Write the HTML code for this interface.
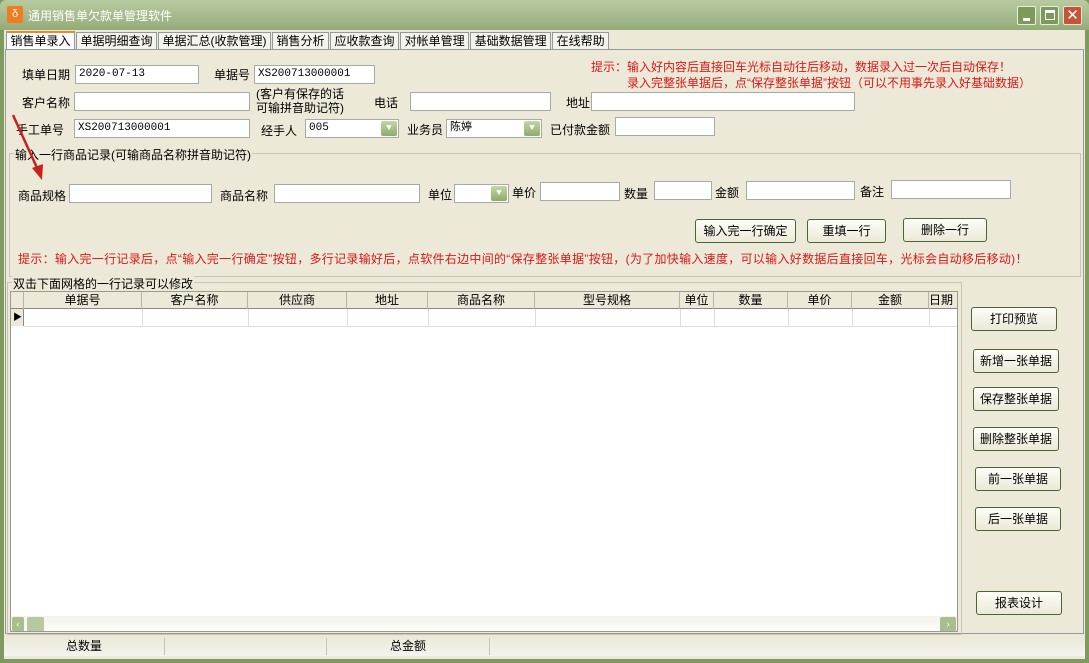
<!DOCTYPE html><html><head><meta charset="utf-8"><style>
*{margin:0;padding:0;box-sizing:border-box}
body{width:1089px;height:663px;overflow:hidden;background:#7f9a5e;font-family:"Liberation Sans","Noto Sans CJK SC",sans-serif;font-size:12px;color:#000;position:relative}
.a{position:absolute;white-space:nowrap}
.in{position:absolute;background:#fff;border:1px solid #a5aca0;height:19px;font-size:11px;line-height:17px;padding-left:3px;font-family:"Liberation Mono","Noto Sans CJK SC",monospace}
.cb{position:absolute;width:16px;height:15px;top:1px;right:1px;background:linear-gradient(#c4d6a8,#8fab6a);border-radius:2px;color:#fff;font-size:9px;text-align:center;line-height:15px}
.btn{position:absolute;background:linear-gradient(#fdfdf8,#ece9d8);border:1px solid #4b6534;border-radius:3px;text-align:center;font-size:12px;line-height:22px;height:24px}
.red{color:#d71a1a}
.th{position:absolute;top:0;height:17px;border-right:1px solid #b8b4a0;text-align:center;line-height:17px;font-size:12px}
.tc{position:absolute;top:17px;height:17px;border-right:1px solid #ddd}
.tab{display:inline-block;border:1px solid #919b9c;padding:0 3.5px;background:#f4f3ee;margin-left:1px}
</style></head><body>
<div class="a" style="left:0;top:0;width:1089px;height:30px;background:linear-gradient(#b8cba0,#a3b98a 60%,#94ab78);border-radius:6px 6px 0 0"></div>
<div class="a" style="left:7px;top:6px;width:16px;height:17px;background:#f07c22;border-radius:2px;color:#fff;font-size:11px;text-align:center;line-height:16px">δ</div>
<div class="a" style="left:28px;top:7px;color:#fff;font-size:12px">通用销售单欠款单管理软件</div>
<div class="a" style="left:1017px;top:6px;width:19px;height:19px;background:#7d9a5a;border:1px solid #e6eedc;border-radius:2px"><div style="position:absolute;left:5px;top:11px;width:7px;height:3px;background:#fff"></div></div>
<div class="a" style="left:1040px;top:6px;width:19px;height:19px;background:#7d9a5a;border:1px solid #e6eedc;border-radius:2px"><div style="position:absolute;left:4px;top:3px;width:10px;height:10px;border:1px solid #fff;border-top-width:3px"></div></div>
<div class="a" style="left:1063px;top:6px;width:19px;height:19px;background:#c5553a;border:1px solid #f2ddd2;border-radius:2px;color:#fff;font-size:15px;line-height:17px;text-align:center">✕</div>
<div class="a" style="left:4px;top:30px;width:1081px;height:629px;background:#ece9d8"></div>
<div class="a" style="left:6px;top:32px;height:17px;font-size:12px;line-height:16px">
<span style="display:inline-block;border:1px solid #919b9c;border-top:2px solid #e68b2c;border-bottom:none;background:#fcfcfe;padding:0 3.5px;height:18px;margin-top:-1px">销售单录入</span><span class="tab">单据明细查询</span><span class="tab">单据汇总(收款管理)</span><span class="tab">销售分析</span><span class="tab">应收款查询</span><span class="tab">对帐单管理</span><span class="tab">基础数据管理</span><span class="tab">在线帮助</span></div>
<div class="a" style="left:5px;top:49px;width:1079px;height:585px;border:1px solid #919b9c;background:#ece9d8"></div>
<div class="a" style="left:22px;top:66px">填单日期</div><div class="in" style="left:75px;top:65px;width:124px">2020-07-13</div>
<div class="a" style="left:214px;top:66px">单据号</div><div class="in" style="left:254px;top:65px;width:121px">XS200713000001</div>
<div class="a red" style="left:591px;top:58px">提示：输入好内容后直接回车光标自动往后移动，数据录入过一次后自动保存！</div>
<div class="a red" style="left:627px;top:74px">录入完整张单据后，点“保存整张单据”按钮（可以不用事先录入好基础数据）</div>
<div class="a" style="left:22px;top:94px">客户名称</div><div class="in" style="left:74px;top:92px;width:176px"></div>
<div class="a" style="left:256px;top:87px;line-height:14px">(客户有保存的话<br>可输拼音助记符)</div>
<div class="a" style="left:374px;top:94px">电话</div><div class="in" style="left:410px;top:92px;width:141px"></div>
<div class="a" style="left:566px;top:94px">地址</div><div class="in" style="left:591px;top:92px;width:264px"></div>
<div class="a" style="left:16px;top:121px">手工单号</div><div class="in" style="left:74px;top:119px;width:176px">XS200713000001</div>
<div class="a" style="left:261px;top:122px">经手人</div><div class="in" style="left:305px;top:119px;width:94px">005<div class="cb">▼</div></div>
<div class="a" style="left:407px;top:121px">业务员</div><div class="in" style="left:446px;top:119px;width:96px">陈婷<div class="cb">▼</div></div>
<div class="a" style="left:550px;top:121px">已付款金额</div><div class="in" style="left:615px;top:117px;width:100px"></div>
<div class="a" style="left:9px;top:153px;width:1072px;height:124px;border:1px solid #c9c5b2"></div>
<div class="a" style="left:14px;top:146px;background:#ece9d8;padding:0 1px">输入一行商品记录(可输商品名称拼音助记符)</div>
<div class="a" style="left:18px;top:187px">商品规格</div><div class="in" style="left:69px;top:184px;width:143px"></div>
<div class="a" style="left:220px;top:187px">商品名称</div><div class="in" style="left:274px;top:184px;width:146px"></div>
<div class="a" style="left:428px;top:186px">单位</div><div class="in" style="left:454px;top:184px;width:55px"><div class="cb">▼</div></div>
<div class="a" style="left:512px;top:184px">单价</div><div class="in" style="left:540px;top:182px;width:80px"></div>
<div class="a" style="left:624px;top:185px">数量</div><div class="in" style="left:654px;top:181px;width:58px"></div>
<div class="a" style="left:715px;top:184px">金额</div><div class="in" style="left:746px;top:181px;width:109px"></div>
<div class="a" style="left:860px;top:183px">备注</div><div class="in" style="left:891px;top:180px;width:120px"></div>
<div class="btn" style="left:695px;top:219px;width:101px">输入完一行确定</div>
<div class="btn" style="left:807px;top:219px;width:79px">重填一行</div>
<div class="btn" style="left:903px;top:218px;width:84px">删除一行</div>
<div class="a red" style="left:18px;top:250px;font-size:12px;letter-spacing:0.3px">提示：输入完一行记录后，点“输入完一行确定”按钮，多行记录输好后，点软件右边中间的“保存整张单据”按钮，(为了加快输入速度，可以输入好数据后直接回车，光标会自动移后移动)！</div>
<div class="a" style="left:7px;top:282px;width:955px;height:353px;border:1px solid #c9c5b2"></div>
<div class="a" style="left:12px;top:275px;background:#ece9d8;padding:0 1px">双击下面网格的一行记录可以修改</div>
<div class="a" style="left:10px;top:291px;width:948px;height:341px;background:#fff;border:1px solid #9c9a8c;overflow:hidden">
<div class="a" style="left:0;top:0;width:948px;height:17px;background:#ece9d8;border-bottom:1px solid #888"></div>
<div class="th" style="left:0;width:13px"></div>
<div class="th" style="left:13px;width:118px">单据号</div>
<div class="th" style="left:131px;width:106px">客户名称</div>
<div class="th" style="left:237px;width:99px">供应商</div>
<div class="th" style="left:336px;width:81px">地址</div>
<div class="th" style="left:417px;width:107px">商品名称</div>
<div class="th" style="left:524px;width:145px">型号规格</div>
<div class="th" style="left:669px;width:34px">单位</div>
<div class="th" style="left:703px;width:74px">数量</div>
<div class="th" style="left:777px;width:64px">单价</div>
<div class="th" style="left:841px;width:77px">金额</div>
<div class="th" style="left:918px;width:30px;text-align:left">日期</div>
<div class="a" style="left:0;top:17px;width:13px;height:17px;background:#ece9d8;border-right:1px solid #888;font-size:9px;line-height:17px;padding-left:2px">▶</div>
<div class="a" style="left:13px;top:34px;width:935px;border-top:1px solid #ddd"></div>
<div class="tc" style="left:131px;width:0"></div><div class="tc" style="left:237px;width:0"></div><div class="tc" style="left:336px;width:0"></div><div class="tc" style="left:417px;width:0"></div><div class="tc" style="left:524px;width:0"></div><div class="tc" style="left:669px;width:0"></div><div class="tc" style="left:703px;width:0"></div><div class="tc" style="left:777px;width:0"></div><div class="tc" style="left:841px;width:0"></div><div class="tc" style="left:918px;width:0"></div>
<div class="a" style="left:0;top:324px;width:948px;height:17px;background:linear-gradient(#f3f2ea,#fefefb)"></div>
<div class="a" style="left:1px;top:325px;width:12px;height:15px;background:#a9bd8e;border-radius:2px;color:#fff;font-size:9px;text-align:center;line-height:15px">‹</div>
<div class="a" style="left:16px;top:325px;width:17px;height:15px;background:#b8c9a2;border-radius:2px"></div>
<div class="a" style="left:929px;top:325px;width:16px;height:15px;background:#a9bd8e;border-radius:2px;color:#fff;font-size:9px;text-align:center;line-height:15px">›</div>
</div>
<div class="btn" style="left:971px;top:307px;width:86px">打印预览</div>
<div class="btn" style="left:973px;top:349px;width:86px">新增一张单据</div>
<div class="btn" style="left:973px;top:387px;width:86px">保存整张单据</div>
<div class="btn" style="left:973px;top:427px;width:86px">删除整张单据</div>
<div class="btn" style="left:975px;top:467px;width:86px">前一张单据</div>
<div class="btn" style="left:975px;top:507px;width:86px">后一张单据</div>
<div class="btn" style="left:976px;top:591px;width:86px">报表设计</div>
<div class="a" style="left:4px;top:637px;width:1081px;height:19px;background:linear-gradient(#ece9d8,#f4f3ee)"></div>
<div class="a" style="left:4px;top:638px;width:161px;height:17px;border-right:1px solid #c9c5b2;text-align:center;line-height:17px">总数量</div>
<div class="a" style="left:165px;top:638px;width:162px;height:17px;border-right:1px solid #c9c5b2"></div>
<div class="a" style="left:327px;top:638px;width:163px;height:17px;border-right:1px solid #c9c5b2;text-align:center;line-height:17px">总金额</div>
<svg class="a" style="left:0;top:100px" width="60" height="90"><line x1="13" y1="15" x2="38" y2="70" stroke="#c8221f" stroke-width="2.5"/><polygon points="42,80 32,68 43,64" fill="#c8221f"/></svg>
</body></html>
